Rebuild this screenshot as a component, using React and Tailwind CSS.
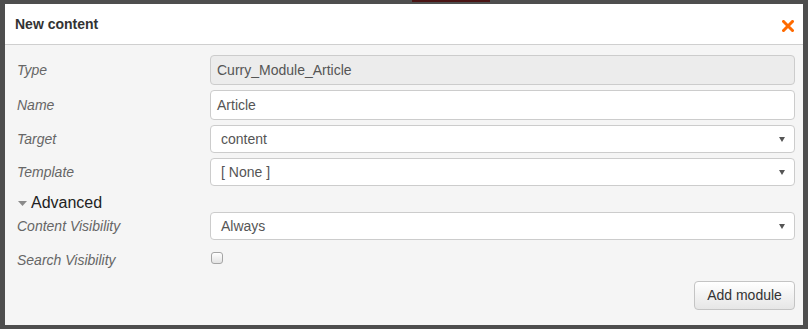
import React from "react";

const font = { fontFamily: '"Liberation Sans", Arial, sans-serif' };

function Arrow() {
  return (
    <svg width="6" height="5" viewBox="0 0 6 5" className="shrink-0 mr-[1px]">
      <path d="M0 0h6L3 5z" fill="#555" />
    </svg>
  );
}

function Row({ label, children, h = "h-[30px]" }) {
  return (
    <div className={`flex items-center ${h}`}>
      <div className="w-[205px] shrink-0 pl-3 text-[14px] italic text-[#666]">{label}</div>
      <div className="flex-1 h-full">{children}</div>
    </div>
  );
}

function Select({ value }) {
  return (
    <div className="flex h-full items-center justify-between rounded-[4px] border border-[#ccc] bg-white pl-[10px] pr-[8px] text-[14px] text-[#555]">
      <span>{value}</span>
      <Arrow />
    </div>
  );
}

export default function App() {
  return (
    <div style={font} className="relative h-[329px] w-[808px] bg-[#4e4e4e] pt-1 pl-[5px] pr-[5px]">
      <div className="absolute left-[412px] top-0 h-[2px] w-[78px] bg-[#4a1414]" />
      <div className="flex h-[321px] w-[798px] flex-col bg-[#f5f5f5]">
        <div className="flex h-[41px] items-center justify-between border-b border-[#cfcfcf] bg-white pl-[10px] pr-[9px]">
          <span className="text-[14px] font-bold text-[#333]">New content</span>
          <svg width="12" height="12" viewBox="0 0 12 12" className="mt-1">
            <path d="M1.5 1.5l9 9M10.5 1.5l-9 9" stroke="#ff6a00" strokeWidth="3" strokeLinecap="square" />
          </svg>
        </div>

        <div className="flex flex-col gap-[5px] pt-[10px] pr-2">
          <Row label="Type">
            <div className="flex h-full items-center rounded-[4px] border border-[#ccc] bg-[#ececec] px-[6px] text-[14px] text-[#555]">
              Curry_Module_Article
            </div>
          </Row>
          <Row label="Name">
            <div className="flex h-full items-center rounded-[4px] border border-[#ccc] bg-white px-[6px] text-[14px] text-[#555]">
              Article
            </div>
          </Row>
          <Row label="Target" h="h-[28px]">
            <Select value="content" />
          </Row>
          <Row label="Template" h="h-[28px]">
            <Select value="[ None ]" />
          </Row>
        </div>

        <div className="mt-[8px] flex h-[18px] items-center pl-[13px] text-[16px] text-[#222]">
          <svg width="10" height="6" viewBox="0 0 10 6" className="mr-[3px] mt-[2px]">
            <path d="M0 0h9L4.5 5z" fill="#8a8a8a" />
          </svg>
          Advanced
        </div>

        <div className="flex flex-col pr-2">
          <Row label="Content Visibility" h="h-[28px]">
            <Select value="Always" />
          </Row>
          <div className="mt-[5px] flex h-[30px]">
            <div className="flex w-[205px] shrink-0 items-center pl-3 text-[14px] italic text-[#666]">
              Search Visibility
            </div>
            <div className="mt-[7px] ml-[1px] h-[12px] w-[12px] rounded-[3px] border border-[#a5a5a5] bg-gradient-to-b from-white to-[#e3e3e3]" />
          </div>
        </div>

        <div className="mt-[6px] flex justify-end pr-2">
          <div className="flex h-[29px] w-[101px] items-center justify-center rounded-[4px] border border-[#c4c4c4] bg-gradient-to-b from-white to-[#e6e6e6] text-[14px] text-[#333]">
            Add module
          </div>
        </div>
      </div>
    </div>
  );
}
